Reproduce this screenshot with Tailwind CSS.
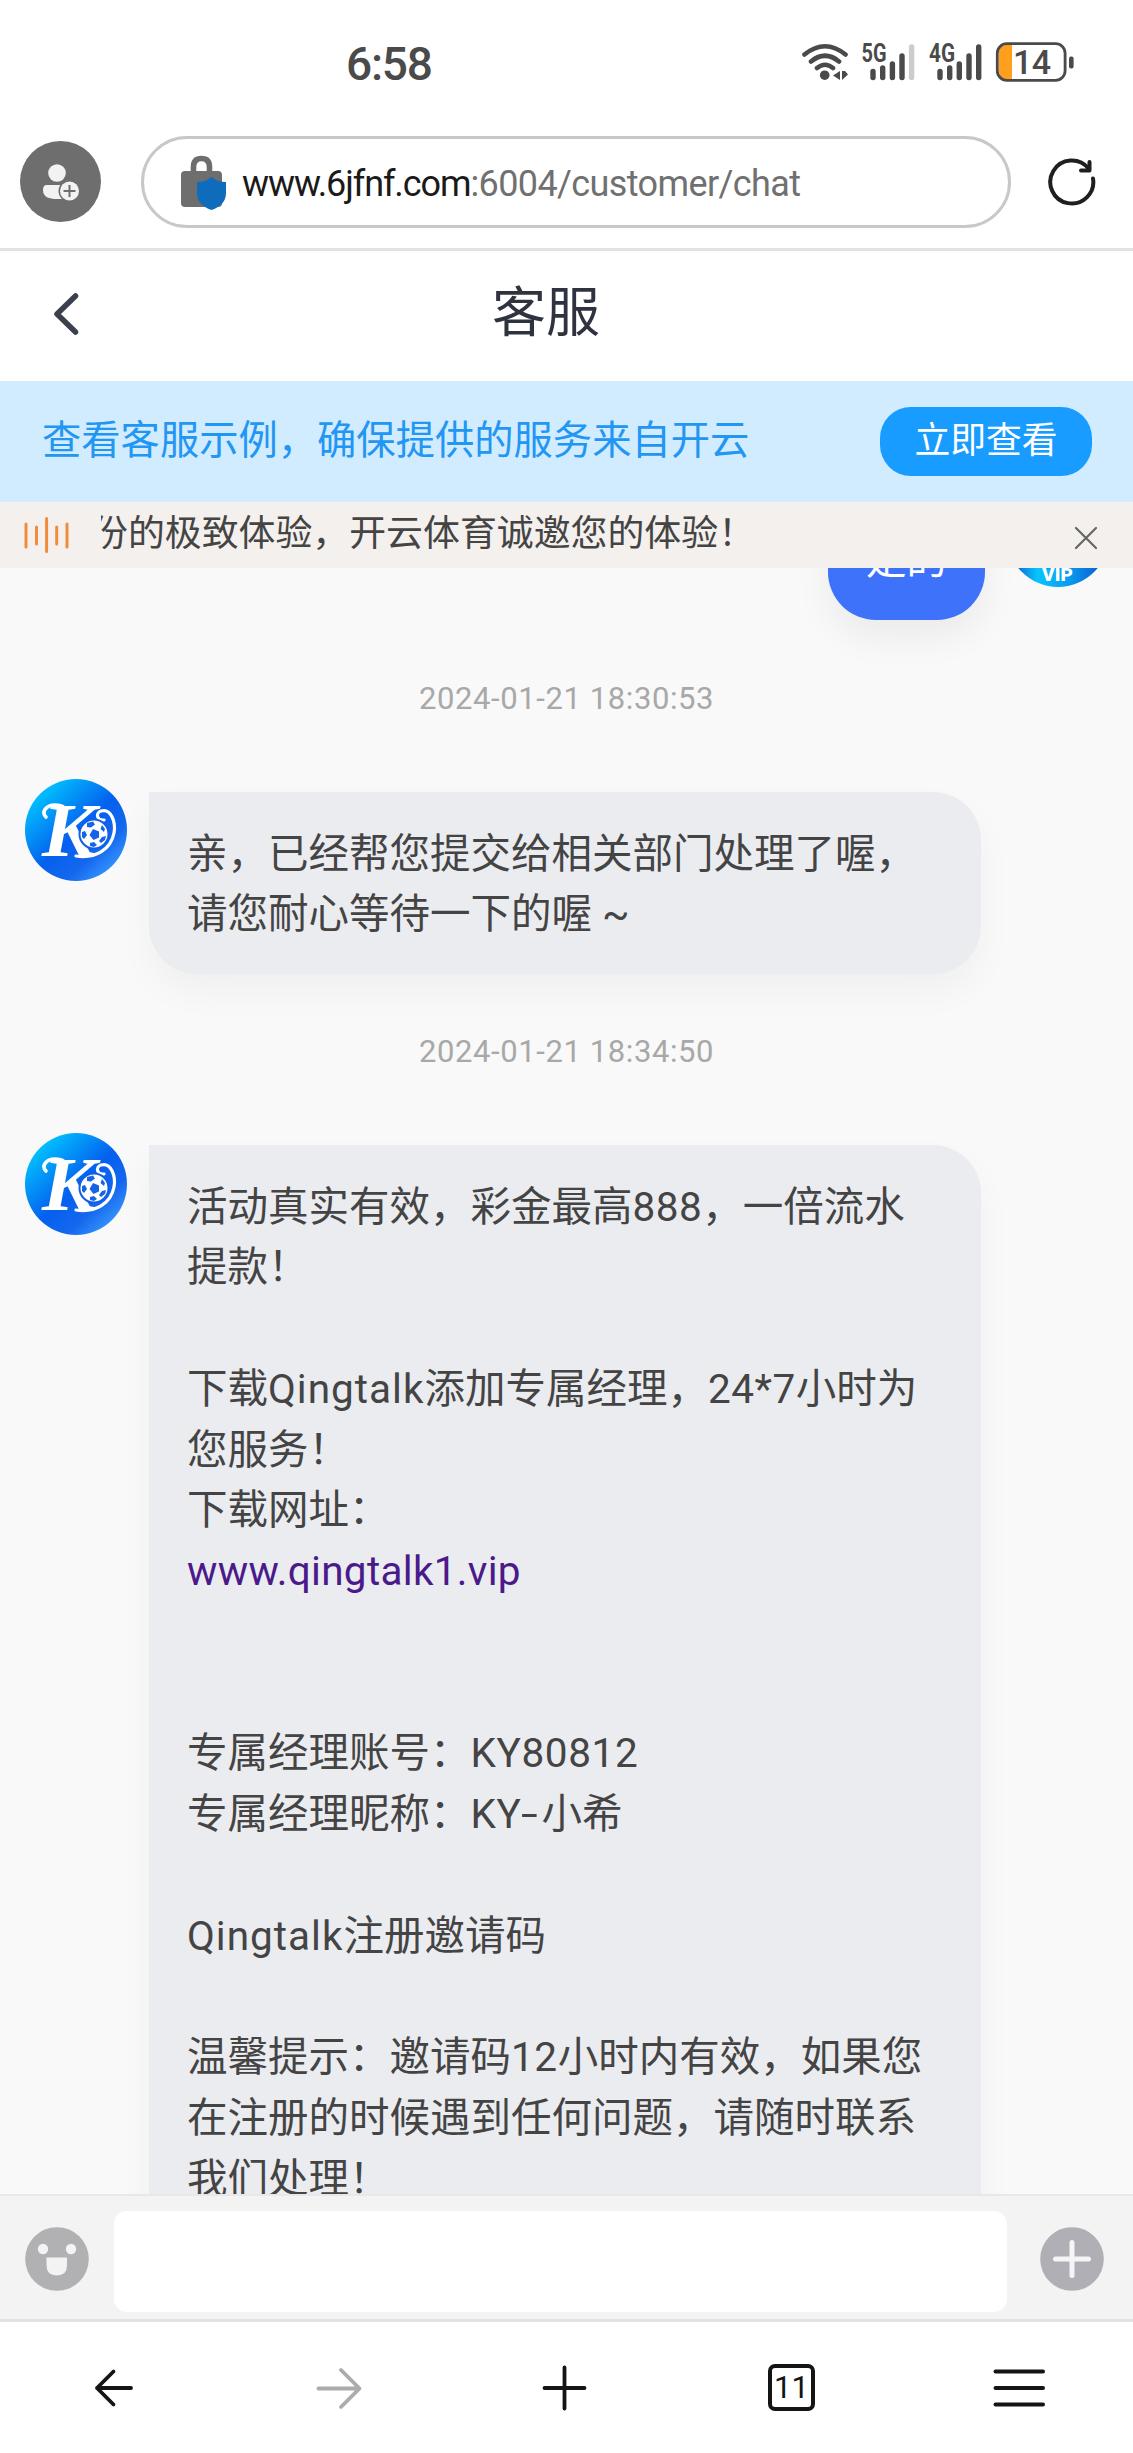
<!DOCTYPE html>
<html lang="zh-CN">
<head>
<meta charset="utf-8">
<title>客服</title>
<script src="https://cdn.jsdelivr.net/npm/@tailwindcss/browser@4"></script>
</head>
<body class="w-[1133px] h-[2453px] overflow-hidden bg-white font-['Roboto','Noto_Sans_CJK_SC',sans-serif]">
<svg class="absolute w-0 h-0">
  <defs>
    <linearGradient id="sky" x1="0.1" y1="0.15" x2="0.85" y2="0.95">
      <stop offset="0" stop-color="#00c4ff"/><stop offset=".5" stop-color="#0560ee"/><stop offset=".75" stop-color="#1467ee"/><stop offset="1" stop-color="#3a9bff"/>
    </linearGradient>
    <linearGradient id="vip" x1="0" y1="0" x2="1" y2="0">
      <stop offset=".1" stop-color="#0a6fd8"/><stop offset=".3" stop-color="#08c4fb"/><stop offset=".6" stop-color="#0a9cf0"/><stop offset=".9" stop-color="#0a62cf"/>
    </linearGradient>
    <symbol id="logo" viewBox="0 0 102 102">
      <circle cx="51" cy="51" r="51" fill="url(#sky)"/>
      <path d="M21 38c-5-5 0-12 9-12 8 0 12 3 10 10" fill="none" stroke="#fff" stroke-width="3.600" stroke-linecap="round"/>
      <text x="17" y="76.500" font-family="Liberation Serif" font-weight="700" font-style="italic" font-size="76" textLength="54" lengthAdjust="spacingAndGlyphs" fill="#fff">K</text>
      <path d="M79 41c-7 1-9-7-3-9 10-3 15 11 13 22-3 16-18 26-38 23" fill="none" stroke="#fff" stroke-width="3.200" stroke-linecap="round"/>
      <circle cx="69" cy="55" r="15.500" fill="#0f5fe8"/>
      <circle cx="69" cy="55" r="13.500" fill="#fff"/>
      <g fill="#1763e6">
        <path d="M68 50l6 2.500 0 6-5.500 2.500-4-5z"/>
        <path d="M62 44l6-1.500 2 3-4 3-4-.5zM77 46l3 4-1 3-3.500-3zM57 53l3-1 2 4-3 4-2-2zM65 64l4-1 3 3-3 2-4-1zM77 58l4-1-1 4-4 3-2-2z"/>
      </g>
    </symbol>
  </defs>
</svg>
<div class="flex flex-col w-[1133px] h-[2453px]">
  <!-- status bar -->
  <div class="h-[128px] shrink-0 flex items-start pl-[346px] pt-[36px] text-[#4a4a4a]">
    <div class="w-[456px] mt-px text-[46px] leading-[54px] font-medium tracking-[-1.2px]">6:58</div>
    <svg class="mt-[6px] w-[48px] h-[40px]" viewBox="802 42 48 40" fill="none" stroke="#4a4a4a" stroke-width="4.600" stroke-linecap="round">
      <path d="M804.500 54.500Q825 38 845.500 54.500M811 61.500Q825 50 839 61.500M817 68Q825 61.500 833 68"/>
      <circle cx="824.700" cy="75.200" r="4.800" fill="#4a4a4a" stroke="none"/>
      <path d="M840 71v9l-7-4.500zM842 71v9l6-5.500-3-3.500z" fill="#4a4a4a" stroke="none"/>
    </svg>
    <svg class="ml-[10px] mt-[6px] w-[56px] h-[40px] overflow-visible" viewBox="860 42 56 40" stroke="#4a4a4a" stroke-width="5.400" stroke-linecap="round">
      <text x="861.500" y="62" font-family="Roboto" font-weight="700" font-size="25" textLength="25" lengthAdjust="spacingAndGlyphs" fill="#4a4a4a" stroke="none">5G</text>
      <path d="M873 71.500v6M882.700 68v9.500M892.400 64v13.500M902 56v21.500"/><path d="M911.600 47v30.500" stroke="#ccc"/>
    </svg>
    <svg class="ml-[11px] mt-[6px] w-[56px] h-[40px] overflow-visible" viewBox="927 42 56 40" stroke="#4a4a4a" stroke-width="5.400" stroke-linecap="round">
      <text x="929" y="62" font-family="Roboto" font-weight="700" font-size="25" textLength="26" lengthAdjust="spacingAndGlyphs" fill="#4a4a4a" stroke="none">4G</text>
      <path d="M940 71.500v6M949.700 68v9.500M959.300 64v13.500M969 56v21.500M978.700 47v30.500"/>
    </svg>
    <svg class="ml-[11px] mt-[6px] w-[82px] h-[40px]" viewBox="994 42 82 40">
      <path d="M1012 45v34h-6q-7 0-7-8v-18q0-8 7-8z" fill="#ff9f1c"/>
      <rect x="997.300" y="43.700" width="67.800" height="36.600" rx="9.500" fill="none" stroke="#4a4a4a" stroke-width="2.800"/>
      <rect x="1069" y="56.500" width="4.600" height="12" rx="2" fill="#4a4a4a"/>
      <text x="1013" y="74" font-family="Roboto" font-weight="500" font-size="34" textLength="38" fill="#4a4a4a">14</text>
    </svg>
  </div>

  <!-- address bar -->
  <div class="h-[123px] shrink-0 flex items-start pl-5 pt-2 border-b-[3px] border-[#e2e2e2]">
    <svg class="mt-[5px] w-[81px] h-[81px]" viewBox="20 141 81 81">
      <circle cx="60.500" cy="181.500" r="40.500" fill="#6e6e6e"/>
      <circle cx="57" cy="173" r="8.800" fill="#f2f2f2"/>
      <path d="M47 185h20v14h-10c-8 0-14-2-14-9 0-3 1-5 4-5z" fill="#f2f2f2"/>
      <circle cx="69.500" cy="191" r="11" fill="#6e6e6e"/><circle cx="69.500" cy="191" r="9.500" fill="#f2f2f2"/>
      <path d="M69.500 185v12M63.500 191h12" stroke="#6e6e6e" stroke-width="2"/>
    </svg>
    <div class="ml-[40px] w-[870px] h-[92px] rounded-full border-[3px] border-[#c8c8c8] flex items-center pl-[37px]">
      <svg class="w-[46px] h-[56px]" viewBox="181 154 46 56">
        <path d="M193.500 173v-6q0-8.500 8-8.500t8 8.500v6" fill="none" stroke="#6e6e6e" stroke-width="5.600"/>
        <rect x="181" y="171" width="41" height="36" rx="4" fill="#6e6e6e"/>
        <path d="M211.500 177q6 5 14.500 5v11q0 12-14.500 17-14.500-5-14.500-17v-11q8.500 0 14.500-5z" fill="#0f6cbd"/>
      </svg>
      <div class="ml-[15px] mt-[3px] text-[36px] leading-[44px] text-[#707070] whitespace-nowrap"><span class="text-[#1a1a1a] tracking-[-1.1px]">www.6jfnf.com</span><span class="tracking-[-0.6px]">:6004/customer/chat</span></div>
    </div>
    <svg class="ml-[36px] mt-[20px] w-[52px] h-[56px]" viewBox="1047 156 52 56" fill="none" stroke="#1f1f1f" stroke-width="4" stroke-linecap="round" stroke-linejoin="round">
      <path d="M1093 178.500a21.500 21.500 0 1 1-4.500-10"/><path d="M1089.500 162v8.500h-8.500"/>
    </svg>
  </div>

  <!-- page title -->
  <div class="h-[130px] shrink-0 flex items-center pl-[52px]">
    <svg class="-mt-1 w-[28px] h-[46px]" viewBox="52 291 28 46" fill="none" stroke="#3b404e" stroke-width="5.500" stroke-linecap="round" stroke-linejoin="round"><path d="M75.500 296L57 314l18.500 18"/></svg>
    <h1 class="ml-[412px] -mt-1 text-[54px] leading-[60px] text-[#2f3340]">客服</h1>
  </div>

  <div class="h-[121px] shrink-0 bg-[#d1ebff] flex items-center justify-between pl-[42px] pr-[41px]">
    <div class="text-[39.3px] leading-[50px] -mt-0.5 text-[#2196f3]">查看客服示例，确保提供的服务来自开云</div>
    <div class="w-[212px] h-[69px] rounded-[31px] bg-[#189cff] text-white text-[35.800px] leading-[69px] text-center">立即查看</div>
  </div>

  <div class="h-[66px] shrink-0 bg-[#f4f0ed] flex items-center">
    <svg class="ml-[22px] w-[50px] h-[40px]" viewBox="22 515 50 40" stroke="#f08c3c" stroke-width="3" stroke-linecap="round"><path d="M26 524v23M36.500 527v17M46.600 518.500v33M56.700 527v17M67 524v23"/></svg>
    <div class="ml-[29px] w-[900px] overflow-hidden"><div class="-ml-[10px] -mt-[2px] text-[36.900px] leading-[50px] text-[#444] whitespace-nowrap">份的极致体验，开云体育诚邀您的体验！</div></div>
    <svg class="ml-[73px] mt-[6px] w-[24px] h-[24px]" viewBox="0 0 24 24" stroke="#666" stroke-width="2.200" stroke-linecap="round"><path d="M2 2l20 20M22 2L2 22"/></svg>
  </div>

  <!-- conversation -->
  <div class="h-[1626px] shrink-0 overflow-hidden bg-[#f9f9f9] text-[40.500px] leading-[60.750px] text-[#444]">
    <div class="-mt-[83px] h-[135px] flex justify-end items-start pr-[24px]">
      <div class="mt-[13.500px] w-[157px] h-[121.500px] rounded-[48px] bg-[#3f72fb] text-white text-center pt-[31px] shadow-[0_18px_36px_rgba(0,0,0,0.06)]">是的</div>
      <svg class="ml-[22px] w-[102px] h-[102px]" viewBox="0 0 102 102">
        <circle cx="51" cy="51" r="51" fill="url(#vip)"/>
        <path d="M5 74Q51 92 97 74L92 81Q51 86 10 81z" fill="#075fc0" opacity=".5"/>
        <text x="35" y="96" font-family="Roboto" font-weight="900" font-size="19" textLength="31" fill="#fff">VIP</text>
      </svg>
    </div>
    <div class="mt-[59px] h-[40px] text-center text-[31px] leading-[40px] tracking-[0.600px] text-[#a8a8a8]">2024-01-21 18:30:53</div>
    <div class="mt-[60px] flex items-start pl-[25px]">
      <svg class="w-[102px] h-[102px]"><use href="#logo"/></svg>
      <div class="ml-[22px] mt-[13px] w-[832px] pt-[31.500px] pb-[29px] pl-[38px] rounded-[48px] rounded-tl-none bg-[#ebecf0] shadow-[0_18px_36px_rgba(0,0,0,0.04)] whitespace-nowrap">亲，已经帮您提交给相关部门处理了喔，<br>请您耐心等待一下的喔 ~</div>
    </div>
    <div class="mt-[58px] h-[40px] text-center text-[31px] leading-[40px] tracking-[0.600px] text-[#a8a8a8]">2024-01-21 18:34:50</div>
    <div class="mt-[61px] flex items-start pl-[25px]">
      <svg class="w-[102px] h-[102px]"><use href="#logo"/></svg>
      <div class="ml-[22px] mt-[12px] w-[832px] h-[1200px] pt-[31.500px] pl-[38px] rounded-[48px] rounded-tl-none bg-[#ebecf0] shadow-[0_18px_36px_rgba(0,0,0,0.04)] whitespace-nowrap">活动真实有效，彩金最高<span class="tracking-[0.5px]">888</span>，一倍流水<br>提款！<br><br>下载<span class="tracking-[1px]">Qingtalk</span>添加专属经理，<span class="tracking-[0.5px]">24*7</span>小时为<br>您服务！<br>下载网址：<br><a class="text-[#4b1a8a] tracking-[0.300px]">www.qingtalk1.vip</a><br><br><br>专属经理账号：<span class="tracking-[0.6px]">KY80812</span><br>专属经理昵称：<span class="tracking-[0.6px]">KY</span><span class="inline-block w-[20px] origin-left scale-x-[1.5]">-</span>小希<br><br><span class="tracking-[1px]">Qingtalk</span>注册邀请码<br><br>温馨提示：邀请码<span class="tracking-[0.6px]">12</span>小时内有效，如果您<br>在注册的时候遇到任何问题，请随时联系<br>我们处理！</div>
    </div>
  </div>

  <!-- message input -->
  <div class="h-[128px] shrink-0 bg-[#f3f3f3] border-t-2 border-t-[#e8e8e8] border-b-[3px] border-b-[#e2e2e2] flex items-start pl-[25px]">
    <svg class="mt-[30.500px] w-[64px] h-[64px]" viewBox="0 0 64 64">
      <circle cx="32" cy="32" r="31.800" fill="#b1b1b3"/><circle cx="18" cy="22" r="5.200" fill="#f3f3f3"/><circle cx="46" cy="22" r="5.200" fill="#f3f3f3"/>
      <path d="M21.500 30.500h20.500v7.500q0 10.500-10.250 10.500t-10.250-10.500z" fill="#f3f3f3"/>
    </svg>
    <div class="ml-[25px] mt-[15px] w-[893px] h-[101px] rounded-[13px] bg-white"></div>
    <svg class="ml-[33px] mt-[30.500px] w-[64px] h-[64px]" viewBox="0 0 64 64">
      <circle cx="32" cy="32" r="31.800" fill="#b0afb6"/><path d="M32 15.500v33M15.500 32h33" stroke="#f5f5f5" stroke-width="5" stroke-linecap="round"/>
    </svg>
  </div>

  <!-- browser toolbar -->
  <div class="h-[131px] shrink-0 bg-white flex items-center">
    <svg class="ml-[92px] w-[44px] h-[44px]" viewBox="92 2365.500 44 44" fill="none" stroke="#141414" stroke-width="3.800" stroke-linecap="round" stroke-linejoin="round"><path d="M131 2387.500H97M113.500 2371L97 2387.500l16.500 16.500"/></svg>
    <svg class="ml-[178px] w-[50px] h-[44px]" viewBox="314 2365.500 50 44" fill="none" stroke="#ababab" stroke-width="3.800" stroke-linecap="round" stroke-linejoin="round"><path d="M318.500 2388H359M341 2369.500l18.500 18.500-18.500 18.500"/></svg>
    <svg class="ml-[177px] w-[48px] h-[48px]" viewBox="541 2363.500 48 48" fill="none" stroke="#141414" stroke-width="3.800" stroke-linecap="round"><path d="M544.500 2387.500h40M564.500 2367v41"/></svg>
    <div class="ml-[179px] w-[47px] h-[47px] rounded-[7px] border-[4px] border-[#141414] text-[#141414] text-[31px] leading-[39px] text-center">11</div>
    <svg class="ml-[176px] w-[56px] h-[44px]" viewBox="991 2366 56 44" stroke="#141414" stroke-width="4" stroke-linecap="round"><path d="M995.500 2371.500H1043M995.500 2388H1043M995.500 2404.500H1043"/></svg>
  </div>
</div>
</body>
</html>
